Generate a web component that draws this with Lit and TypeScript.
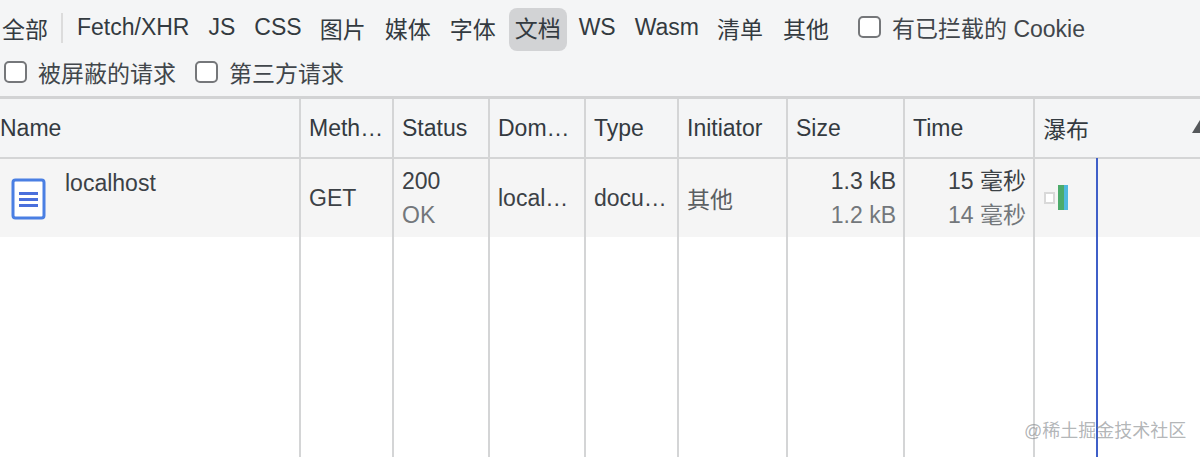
import { LitElement, html, css, svg } from "lit";
import { customElement } from "lit/decorators.js";

const filters: [string, boolean][] = [
  ["Fetch/XHR", false], ["JS", false], ["CSS", false], ["图片", true],
  ["媒体", true], ["字体", true], ["文档", true], ["WS", false],
  ["Wasm", false], ["清单", true], ["其他", true],
];
const gaps = [8, 19, 19, 18, 19, 19, 13, 18, 19, 18, 20];

@customElement("app-root")
export class AppRoot extends LitElement {
  static styles = css`
    :host {
      display: block;
      width: 1200px;
      height: 457px;
      overflow: hidden;
      position: relative;
      background: #fff;
      color: #333a40;
      font-family: "Liberation Sans", "Noto Sans CJK SC", sans-serif;
      font-size: 23px;
    }
    .toolbar {
      box-sizing: border-box;
      background: #f4f5f6;
      border-bottom: 3px solid #d2d3d4;
      height: 99px;
      display: flex;
      flex-direction: column;
    }
    .row1 { display: flex; align-items: center; height: 55px; padding-left: 2px; }
    .row2 { display: flex; align-items: center; height: 38px; padding-left: 4px; padding-bottom: 4px; box-sizing: border-box; }
    .all { width: 46px; padding-top: 1px; }
    .sep { width: 2px; height: 30px; background: #dcdcdc; margin: 0 6px 0 13px; }
    .tabs { display: flex; align-items: center; }
    .tab { line-height: 28px; white-space: nowrap; }
    .tab.en { margin-top: -2px; }
    .tab.cn { margin-top: 4px; }
    .tab.on {
      background: #d2d3d5;
      border-radius: 8px;
      padding: 7px 6px 8px;
      margin-top: 3px;
      margin-right: -6px;
    }
    .cb {
      width: 23px;
      height: 22px;
      box-sizing: border-box;
      border: 2px solid #75777a;
      border-radius: 5px;
      background: #fff;
      flex: none;
    }
    .cookie { display: flex; align-items: center; gap: 11px; margin-left: 29px; color: #41464b; margin-top: -2px; }
    .lbl { display: flex; align-items: center; gap: 11px; color: #41464b; margin-right: 19px; }
    .grid {
      display: grid;
      grid-template-columns: 301px 93px 96px 96px 93px 109px 117px 130px 1fr;
      grid-template-rows: 60px 78px 220px;
    }
    .c {
      box-sizing: border-box;
      border-right: 2px solid #d4d5d6;
      padding-left: 8px;
      white-space: nowrap;
      overflow: hidden;
      display: flex;
      align-items: center;
      min-width: 0;
    }
    .c.last { border-right: none; }
    .h { background: #f4f5f6; border-bottom: 2px solid #d4d5d6; position: relative; }
    .d { background: #f5f5f5; color: #3c4146; }
    .e { background: #fff; }
    .ell { overflow: hidden; text-overflow: ellipsis; display: block; }
    .name { padding-left: 0; }
    .namecell { padding-left: 11px; gap: 18px; align-items: flex-start; }
    .namecell svg { margin-top: 19px; flex: none; }
    .namecell span { margin-top: 11px; }
    .two { flex-direction: column; align-items: flex-start; justify-content: center; gap: 5px; line-height: 29px; padding-top: 1px; }
    .right { align-items: flex-end; padding-right: 7px; padding-left: 0; }
    .sub { color: #73777b; }
    .other { color: #5a5e62; }
    .sort {
      position: absolute;
      right: -8px;
      top: 21px;
      width: 0;
      height: 0;
      border-left: 8px solid transparent;
      border-right: 8px solid transparent;
      border-bottom: 13px solid #55585b;
    }
    .wf { position: relative; }
    .wf .box { position: absolute; left: 9px; top: 33px; width: 11px; height: 12px; border: 2px solid #d9d9d9; background: #fff; box-sizing: border-box; }
    .wf .g { position: absolute; left: 23px; top: 26px; width: 6px; height: 25px; background: #4cab6b; }
    .wf .b { position: absolute; left: 29px; top: 26px; width: 4px; height: 25px; background: #4fb8de; }
    .line { position: absolute; left: 1096px; top: 158px; bottom: 0; width: 2px; background: #3f5fc8; }
    .mark {
      position: absolute;
      left: 1024px;
      top: 420px;
      font-size: 18px;
      line-height: 22px;
      color: rgba(130, 134, 138, 0.62);
      white-space: nowrap;
    }
  `;

  private icon() {
    return html`<svg width="36" height="42" viewBox="0 0 36 42">
      ${svg`<rect x="2" y="2" width="31" height="38" rx="2.5" fill="#fff" stroke="#4a7fe3" stroke-width="3"/>
      <path d="M8 15.5H27M8 21.5H27M8 27.5H27" stroke="#4a6fdc" stroke-width="3" fill="none"/>`}
    </svg>`;
  }

  render() {
    const cols = 9;
    const blanks = Array.from({ length: cols }, (_, i) => html`<div class="c e ${i === cols - 1 ? "last" : ""}"></div>`);
    return html`
      <div class="toolbar">
        <div class="row1">
          <span class="all">全部</span>
          <span class="sep"></span>
          <div class="tabs">
            ${filters.map(([t, cn], i) => html`<span
              class="tab ${cn ? "cn" : "en"} ${t === "文档" ? "on" : ""}"
              style="margin-left:${gaps[i]}px"
            >${t}</span>`)}
          </div>
          <label class="cookie"><span class="cb"></span>有已拦截的 Cookie</label>
        </div>
        <div class="row2">
          <label class="lbl"><span class="cb"></span>被屏蔽的请求</label>
          <label class="lbl"><span class="cb"></span>第三方请求</label>
        </div>
      </div>
      <div class="grid">
        <div class="c h name">Name</div>
        <div class="c h"><span class="ell">Meth…</span></div>
        <div class="c h">Status</div>
        <div class="c h"><span class="ell">Dom…</span></div>
        <div class="c h">Type</div>
        <div class="c h">Initiator</div>
        <div class="c h">Size</div>
        <div class="c h">Time</div>
        <div class="c h last">瀑布<span class="sort"></span></div>

        <div class="c d namecell">${this.icon()}<span>localhost</span></div>
        <div class="c d">GET</div>
        <div class="c d two"><span>200</span><span class="sub">OK</span></div>
        <div class="c d">local…</div>
        <div class="c d">docu…</div>
        <div class="c d other">其他</div>
        <div class="c d two right"><span>1.3 kB</span><span class="sub">1.2 kB</span></div>
        <div class="c d two right"><span>15 毫秒</span><span class="sub">14 毫秒</span></div>
        <div class="c d wf last"><span class="box"></span><span class="g"></span><span class="b"></span></div>

        ${blanks}
      </div>
      <div class="line"></div>
      <div class="mark">@稀土掘金技术社区</div>
    `;
  }
}
